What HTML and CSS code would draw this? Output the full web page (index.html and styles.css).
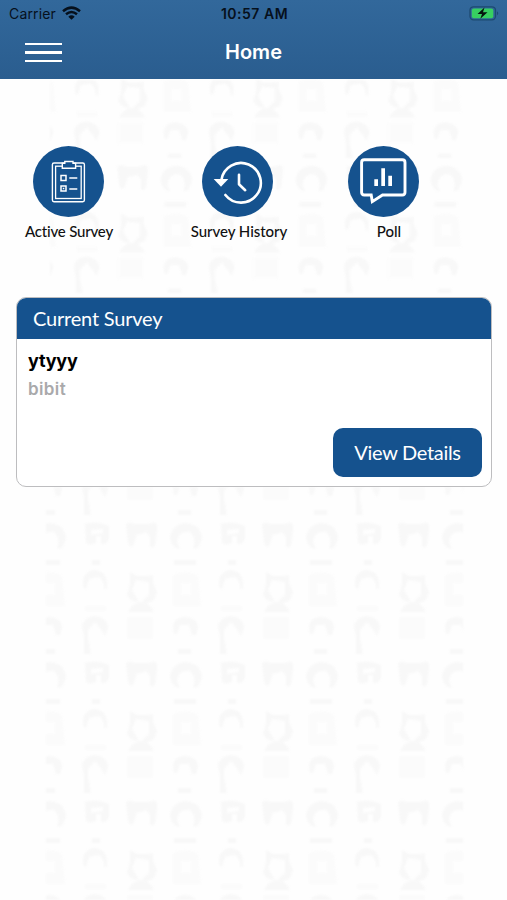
FILE: index.html
```html
<!DOCTYPE html>
<html lang="en">
<head>
<meta charset="utf-8">
<meta name="viewport" content="width=device-width, initial-scale=1">
<title>Home</title>
<link rel="stylesheet" href="styles.css">
</head>
<body>
<div class="screen">
  <svg class="backdrop" width="507" height="821" viewBox="0 79 507 821" aria-hidden="true">
    <defs>
      <g id="people" fill="#f6f6f6">
        <path d="M14 9Q26 5 38 11V24Q36 30 30 29V21H25V28Q18 31 15 28ZM20 15V20L32 18V14Z" fill-rule="evenodd"/>
        <path d="M21 45H29V50H21Z"/>
        <path d="M55 9Q59 6 63 9H78Q83 6 86 9V16L84 31Q82 34 79 32V22L75 17Q69 20 66 19L62 31Q58 33 57 27Z"/>
        <path d="M99 23Q101 9 115 8Q130 9 131 24L127 33L122 34Q126 23 119 17Q107 15 106 28L109 34Q101 34 99 23Z"/>
        <path d="M103 45H125V50H103Z"/>
        <path d="M12 68Q12 56 24 55Q36 57 36 68V74H33Q33 64 27 62L18 64L15 74Q12 74 12 68Z"/>
        <path d="M14 91H35V96H14Z" fill="#fafafa"/>
        <path d="M59 57L66 61H77L82 60V68L86 77L83 85L75 89L71 87L78 80V67L65 65L61 75L68 87Q59 87 56 80L59 70Z"/>
        <path d="M57 97Q61 88 70 87Q80 89 83 97Z"/>
        <path d="M102 60Q115 54 127 61L130 91H102ZM110 68V80H120V68Z" fill="#fafafa" fill-rule="evenodd"/>
        <path d="M11 112Q12 102 24 101Q37 103 37 113L34 121L29 113L24 107L17 115V123L20 139H13V121Z"/>
        <path d="M56 102H82V124H56Z" fill="#fbfbfb"/>
        <path d="M102 112Q103 102 114 102Q127 103 127 113L125 120H121L118 110L109 110L106 119H103Z"/>
        <path d="M107 134H120V139H107Z"/>
      </g>
      <pattern id="top-tile" width="135" height="135" patternUnits="userSpaceOnUse" patternTransform="translate(63 23)"><use href="#people" transform="scale(.985 .975)"/></pattern>
      <pattern id="tile" width="136" height="139" patternUnits="userSpaceOnUse" patternTransform="translate(71 515)"><use href="#people"/></pattern>
    </defs>
    <g class="faces">
      <rect x="50" y="80" width="412" height="217" fill="url(#top-tile)"/>
      <rect x="46" y="487" width="417" height="413" fill="url(#tile)"/>
    </g>
  </svg>

  <header class="topbar">
    <div class="status">
      <div class="carrier">
        <span>Carrier</span>
        <svg width="19" height="14" viewBox="0 0 19 14" fill="none" stroke="#06101c" stroke-width="2.5"><path d="M1 5.2Q9.5-2 18 5.2M4 8.3Q9.5 3.8 15 8.3"/><path d="M6.3 10.7Q9.5 8 12.7 10.7L9.5 13.8Z" fill="#06101c" stroke="none"/></svg>
      </div>
      <span class="time">10:57 AM</span>
      <svg class="battery" width="31" height="15" viewBox="0 0 31 15"><rect x="1" y=".8" width="25.5" height="13" rx="3.5" fill="none" stroke="#1d4a70" stroke-width="1.3"/><rect x="2.8" y="2.4" width="21.5" height="9.8" rx="2" fill="#37cf61"/><path d="M28 5.2Q30.5 7.2 28 9.2Z" fill="#1d4a70"/><path d="M15.5 1.6L8.5 8H13L11.3 12.8L18.5 6.3H14Z" fill="#05140d"/></svg>
    </div>
    <div class="nav">
      <button class="menu" aria-label="Menu"><i></i><i></i><i></i></button>
      <h1>Home</h1>
    </div>
  </header>

  <main>
    <nav class="actions">
      <a class="action active">
        <svg viewBox="0 0 71 71"><circle cx="35.5" cy="35.5" r="35.5" fill="#15528e"/><g fill="none" stroke="#fff"><rect x="19.4" y="17" width="32" height="38.7" rx="1.6" stroke-width="1.4"/><rect x="22.6" y="20.2" width="25.6" height="32.3" stroke-width="1.3"/><path d="M29.3 17.2H31.8V15.5H40V17.2H42.6V22.2H29.3Z" fill="#15528e" stroke-width="1.4"/><g stroke-width="1.5"><rect x="28" y="29.5" width="5" height="5"/><rect x="28" y="40" width="5" height="5"/><path d="M36.3 32H44.3M36.3 43H44.3M29.8 42.5H31.3"/></g></g></svg>
        <span>Active Survey</span>
      </a>
      <a class="action history">
        <svg viewBox="0 0 71 71"><circle cx="35.5" cy="35.5" r="35.5" fill="#15528e"/><g fill="none" stroke="#fff" stroke-width="2.6" stroke-linecap="round"><path d="M19.4 34A19.8 19.8 0 1 1 23.4 49"/><path d="M37 28.8V38.3L43.2 44.2" stroke-linejoin="round"/></g><path d="M11.7 33H26.3L19 40.8Z" fill="#fff"/></svg>
        <span>Survey History</span>
      </a>
      <a class="action poll">
        <svg viewBox="0 0 71 71"><circle cx="35.5" cy="35.5" r="35.5" fill="#15528e"/><path d="M16.3 13.8H54.3Q57 13.8 57 16.5V46.3Q57 49 54.3 49H34.5L24.3 55.6L23.2 49H16.3Q13.6 49 13.6 46.3V16.5Q13.6 13.8 16.3 13.8Z" fill="none" stroke="#fff" stroke-width="2.9"/><path d="M26.3 33.3H30V40H26.3ZM33.3 22.3H37V40H33.3ZM40.3 29.7H44V40H40.3Z" fill="#fff"/></svg>
        <span>Poll</span>
      </a>
    </nav>

    <section class="card">
      <h2><span>Current Survey</span></h2>
      <div class="body">
        <p class="name">ytyyy</p>
        <p class="desc">bibit</p>
        <button class="details"><span>View Details</span></button>
      </div>
    </section>
  </main>
</div>
</body>
</html>
```
FILE: styles.css
```css
* { box-sizing: border-box; }
body { margin: 0; background: #fefefe; font-family: Inter, "Liberation Sans", sans-serif; }
h1, h2, p { margin: 0; }
button { border: 0; padding: 0; font: inherit; }
.screen { position: relative; width: 507px; height: 900px; overflow: hidden; }
.backdrop { position: absolute; left: 0; top: 79px; }
.faces { opacity: .75; filter: blur(1.2px); }
.topbar { position: relative; height: 79px; background: linear-gradient(#32689b, #2a5d8f); }
.status { display: grid; grid-template-columns: 1fr auto 1fr; align-items: center; height: 27px; padding: 0 7px 0 9px; color: #06101c; font-size: 14px; }
.carrier { display: flex; align-items: center; gap: 6px; letter-spacing: .15px; }
.carrier svg { margin-top: -2px; }
.time { font-weight: 600; font-size: 14px; letter-spacing: .5px; }
.battery { justify-self: end; }
.nav { display: grid; grid-template-columns: 37px 1fr 37px; align-items: center; height: 50px; padding: 0 25px; }
.menu { display: flex; flex-direction: column; gap: 6px; padding-top: 1px; background: none; }
.menu i { height: 2.6px; background: #fff; }
h1 { color: #fff; font-size: 20px; font-weight: 600; line-height: 24px; text-align: center; }
main { position: relative; }
.actions { display: flex; height: 218px; padding: 67px 0 0 18px; }
.action { display: flex; flex-direction: column; align-items: center; font: 500 15px/20px Lato, sans-serif; color: #111; white-space: nowrap; }
.action svg { width: 71px; height: 71px; }
.action span { margin-top: 4px; }
.active { width: 100px; margin-right: 69px; }
.history { width: 100px; margin-right: 46px; }
.poll { width: 100px; }
.active span { position: relative; left: 1px; letter-spacing: -.2px; }
.history span { position: relative; left: 2px; letter-spacing: -.05px; }
.poll span { position: relative; left: 6px; }
.card { height: 190px; margin: 0 15px 0 16px; border: 1.5px solid #bdbdbf; border-radius: 10px; background: #fff; overflow: hidden; }
h2 { height: 41px; padding-left: 16px; background: #15528e; color: #fff; font: 400 20px/41px Lato, sans-serif; letter-spacing: -.2px; }
.body { display: flex; flex-direction: column; height: 147px; padding: 10px 9px 9px 11px; }
.name { font-size: 18px; font-weight: 700; line-height: 23px; letter-spacing: -.2px; color: #000; }
.desc { margin-top: 6px; font-size: 17px; font-weight: 600; line-height: 23px; letter-spacing: .4px; color: #a9a9ab; }
.details { align-self: flex-end; width: 149px; height: 49px; margin-top: auto; border-radius: 10px; background: #15528e; color: #fff; font: 400 20px/49px Lato, sans-serif; letter-spacing: -.3px; }
```
